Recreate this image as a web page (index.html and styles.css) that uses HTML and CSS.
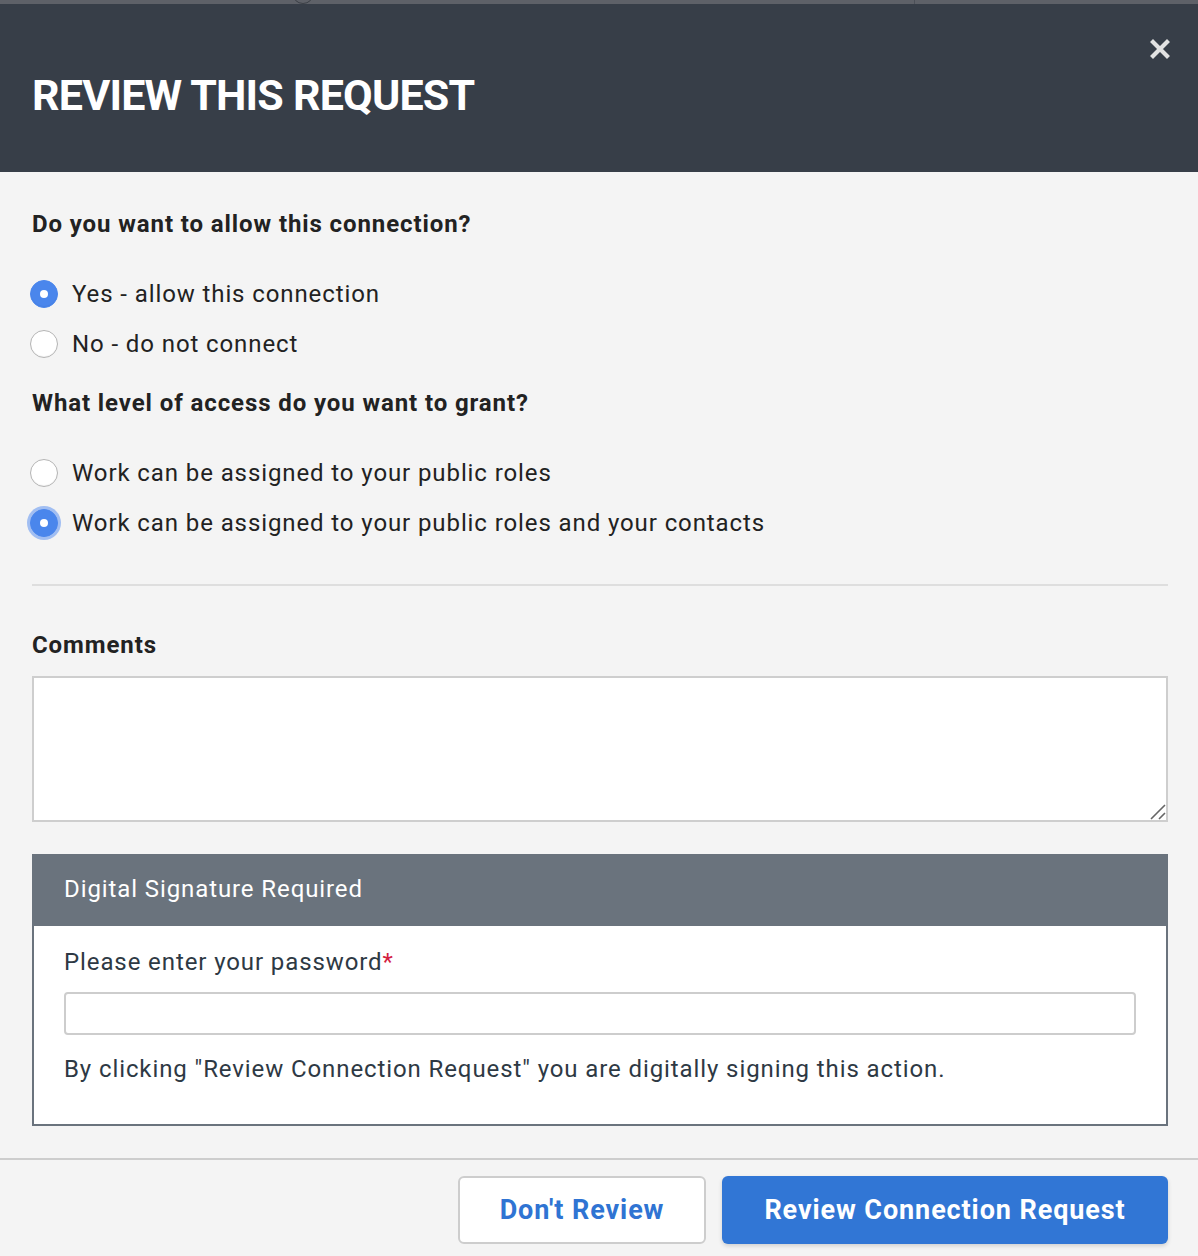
FILE: index.html
```html
<!DOCTYPE html>
<html>
<head>
<meta charset="utf-8">
<link rel="stylesheet" href="styles.css">
</head>
<body>
<div class="backdrop">
  <span class="bd-circle"></span>
  <span class="bd-divider"></span>
</div>
<div class="modal">
  <header class="modal-header">
    <h1 class="modal-title">REVIEW THIS REQUEST</h1>
    <button class="close" aria-label="Close">
      <svg width="20" height="20" viewBox="0 0 20 20"><path d="M3 3 L17 17 M17 3 L3 17" stroke="#e2e2e2" stroke-width="4.2" stroke-linecap="square"/></svg>
    </button>
  </header>
  <main class="modal-body">
    <h2 class="question">Do you want to allow this connection?</h2>
    <div class="radio-group">
      <label class="radio-row"><span class="radio checked"></span><span class="radio-label">Yes - allow this connection</span></label>
      <label class="radio-row"><span class="radio"></span><span class="radio-label">No - do not connect</span></label>
    </div>
    <h2 class="question q2">What level of access do you want to grant?</h2>
    <div class="radio-group">
      <label class="radio-row"><span class="radio"></span><span class="radio-label">Work can be assigned to your public roles</span></label>
      <label class="radio-row"><span class="radio checked focused"></span><span class="radio-label">Work can be assigned to your public roles and your contacts</span></label>
    </div>
    <hr class="divider">
    <h2 class="question comments-label">Comments</h2>
    <div class="textarea">
      <svg class="grip" width="16" height="16" viewBox="0 0 16 16"><path d="M1 15 L15 1 M9 15 L15 9" stroke="#666" stroke-width="1.6"/></svg>
    </div>
    <section class="sig">
      <div class="sig-head">Digital Signature Required</div>
      <div class="sig-body">
        <div class="pw-label">Please enter your password<span class="req">*</span></div>
        <div class="pw-input"></div>
        <p class="sig-note">By clicking "Review Connection Request" you are digitally signing this action.</p>
      </div>
    </section>
  </main>
  <footer class="modal-footer">
    <button class="btn btn-secondary">Don't Review</button>
    <button class="btn btn-primary">Review Connection Request</button>
  </footer>
</div>
</body>
</html>
```
FILE: styles.css
```css
* { box-sizing: border-box; }
html, body { margin: 0; padding: 0; }
body {
  width: 1198px;
  height: 1256px;
  overflow: hidden;
  background: #f4f4f4;
  font-family: Roboto, "Liberation Sans", sans-serif;
  color: #222;
}
.backdrop {
  position: relative;
  height: 4px;
  background: #5e6168;
  overflow: hidden;
}
.bd-circle {
  position: absolute;
  left: 292px;
  top: -18px;
  width: 22px;
  height: 22px;
  border: 1.5px solid #3b3f46;
  border-radius: 50%;
}
.bd-divider {
  position: absolute;
  left: 914px;
  top: 0;
  width: 1px;
  height: 4px;
  background: #4c5058;
}
.modal-header {
  height: 168px;
  background: #373e48;
  display: flex;
  align-items: flex-start;
  justify-content: space-between;
  padding: 0 28px 0 32px;
}
.modal-title {
  margin: 66px 0 0;
  font-size: 43px;
  font-weight: 700;
  color: #fff;
  letter-spacing: -0.8px;
  line-height: 50px;
}
.close {
  margin-top: 35px;
  background: none;
  border: 0;
  padding: 0;
  width: 20px;
  height: 20px;
  cursor: pointer;
}
.modal-body {
  padding: 0 30px 0 32px;
}
.question {
  margin: 0;
  font-size: 24px;
  font-weight: 700;
  line-height: 30px;
  letter-spacing: 0.9px;
  color: #222;
  padding-top: 37px;
}
.radio-group {
  display: flex;
  flex-direction: column;
  gap: 22px;
  margin-top: 41px;
  margin-left: -2px;
}
.q2 { padding-top: 30px; }
.radio-row {
  display: flex;
  align-items: center;
  gap: 14px;
  height: 28px;
  font-size: 24px;
  letter-spacing: 0.9px;
}
.radio {
  width: 28px;
  height: 28px;
  border-radius: 50%;
  background: #fff;
  border: 1px solid #b4b4b4;
  box-shadow: inset 0 -1px 1px rgba(0,0,0,0.05);
  flex: none;
  position: relative;
}
.radio.checked {
  background: #4a86ec;
  border-color: #4a86ec;
}
.radio.checked::after {
  content: "";
  position: absolute;
  left: 50%;
  top: 50%;
  width: 8px;
  height: 8px;
  margin: -4px 0 0 -4px;
  border-radius: 50%;
  background: #fff;
}
.radio.focused {
  box-shadow: 0 0 0 3px rgba(92, 146, 240, 0.55);
}
.radio-label {
  color: #222;
  line-height: 30px;
}
.divider {
  border: 0;
  height: 2px;
  background: #dedede;
  margin: 47px 0 0;
}
.comments-label { padding-top: 44px; }
.textarea {
  margin-top: 16px;
  height: 146px;
  background: #fff;
  border: 2px solid #cecece;
  position: relative;
}
.grip {
  position: absolute;
  right: 0;
  bottom: 0;
}
.sig {
  margin-top: 32px;
  border: 2px solid #6a737d;
  background: #fff;
}
.sig-head {
  background: #6a737d;
  color: #fff;
  font-size: 24px;
  letter-spacing: 0.9px;
  height: 72px;
  line-height: 70px;
  padding-left: 30px;
  margin: -2px -2px 0;
  padding-left: 32px;
}
.sig-body {
  padding: 20px 30px 0 30px;
}
.pw-label {
  font-size: 24px;
  letter-spacing: 0.9px;
  line-height: 32px;
  color: #2e3944;
}
.req { color: #d3203f; }
.pw-input {
  margin-top: 14px;
  height: 43px;
  border: 2px solid #cdcdcd;
  border-radius: 4px;
  background: #fff;
}
.sig-note {
  margin: 18px 0 0;
  font-size: 24px;
  letter-spacing: 0.9px;
  line-height: 32px;
  color: #2e3944;
  padding-bottom: 39px;
}
.modal-footer {
  margin-top: 32px;
  border-top: 2px solid #cdcdcd;
  display: flex;
  justify-content: flex-end;
  gap: 16px;
  padding: 16px 30px 0;
}
.btn {
  height: 68px;
  border-radius: 6px;
  font-family: Roboto, "Liberation Sans", sans-serif;
  font-size: 27px;
  font-weight: 700;
  letter-spacing: 0.9px;
  cursor: pointer;
}
.btn-secondary {
  width: 248px;
  background: #fff;
  border: 2px solid #cdcdcd;
  color: #2f74d3;
}
.btn-primary {
  width: 446px;
  background: #3176d5;
  border: 0;
  color: #fff;
  box-shadow: 0 2px 4px rgba(0,0,0,0.15);
}
```
